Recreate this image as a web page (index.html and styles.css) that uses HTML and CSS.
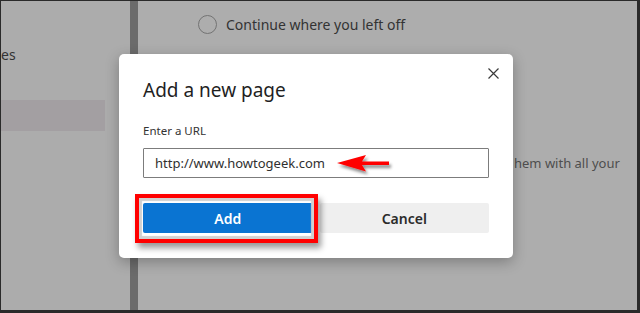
FILE: index.html
```html
<!DOCTYPE html>
<html lang="en">
<head>
  <meta charset="UTF-8">
  <title>Add a new page</title>
  <link rel="stylesheet" href="styles.css">
</head>
<body>

  <div class="screen">
    <aside class="sidebar">
      <div class="side-item">es</div>
      <div class="side-item selected"></div>
    </aside>
    <div class="divider"></div>

    <main class="settings">
      <div class="radio-row">
        <span class="radio"></span>
        <span>Continue where you left off</span>
      </div>
      <div class="radio-row">
        <span class="radio"></span>
        <span>Open a new tab</span>
      </div>
      <p class="hint">hem with all your</p>
    </main>

    <div class="dialog">
      <button class="close" aria-label="Close">
        <svg width="11" height="11" viewBox="0 0 11 11">
          <path d="M0.5 0.5 L10.5 10.5 M10.5 0.5 L0.5 10.5" stroke="#3a3a3a" stroke-width="1.2" fill="none"/>
        </svg>
      </button>
      <h1>Add a new page</h1>
      <label for="url">Enter a URL</label>
      <div class="url-box" id="url">http://www.howtogeek.com</div>
      <div class="actions">
        <button class="btn btn-add">Add</button>
        <button class="btn btn-cancel">Cancel</button>
      </div>
    </div>

    <!-- annotations drawn on top of the screenshot -->
    <div class="mark-box"></div>
    <svg class="mark-arrow" width="60" height="24" viewBox="0 0 60 24">
      <defs>
        <filter id="drop" x="-20%" y="-40%" width="150%" height="200%">
          <feDropShadow dx="2" dy="3" stdDeviation="1.6" flood-color="#000" flood-opacity="0.45"/>
        </filter>
      </defs>
      <path d="M2 10 L31 2 L27 8.5 L54 8.5 L54 12 L27 12 L31 18.5 Z" fill="#f00" filter="url(#drop)"/>
    </svg>
  </div>

</body>
</html>
```

FILE: styles.css
```css
/* General Styles */
body {
  margin: 0;
  font-family: 'Noto Sans', 'Open Sans', sans-serif;
  background: #222;
}

.screen {
  position: relative;
  display: flex;
  width: 640px;
  height: 313px;
  box-sizing: border-box;
  border-top: 1px solid #2a2a2a;
  border-left: 1px solid #2a2a2a;
  border-right: 3px solid #2a2a2a;
  border-bottom: 3px solid #2a2a2a;
  background: #adadad;
  overflow: hidden;
}

/* Sidebar */
.sidebar {
  width: 129px;
  flex-shrink: 0;
  background: #acacac;
  padding-top: 41px;
}

.side-item {
  height: 26px;
  line-height: 26px;
  font-size: 14px;
  color: #333;
}

.side-item.selected {
  margin-top: 32px;
  height: 31px;
  width: 104px;
  background: #a39fa2;
}

.divider {
  width: 8px;
  flex-shrink: 0;
  background: #6b6b6b;
}

/* Settings area */
.settings {
  flex: 1;
  padding: 13px 0 0 60px;
  color: #333;
  font-size: 14px;
}

.radio-row {
  display: flex;
  align-items: center;
  gap: 9px;
  height: 21px;
  margin-bottom: 18px;
}

.radio {
  width: 17px;
  height: 17px;
  border: 1px solid #737373;
  border-radius: 50%;
}

.hint {
  margin: 80px 0 0 316px;
  white-space: nowrap;
  font-size: 13px;
  color: #4e4e4e;
}

/* Dialog */
.dialog {
  position: absolute;
  left: 118px;
  top: 53px;
  width: 394px;
  height: 204px;
  box-sizing: border-box;
  padding: 22px 24px 24px;
  background: #fff;
  border-radius: 5px;
  box-shadow: 0 4px 14px rgba(0, 0, 0, 0.28);
  display: flex;
  flex-direction: column;
}

.close {
  position: absolute;
  top: 14px;
  right: 14px;
  padding: 0;
  border: none;
  background: none;
  line-height: 0;
}

h1 {
  margin: 0;
  font-size: 19px;
  font-weight: 400;
  line-height: 28px;
  color: #1f1f1f;
}

label {
  margin-top: 18px;
  font-size: 11.5px;
  line-height: 18px;
  color: #333;
}

.url-box {
  margin-top: 8px;
  height: 30px;
  box-sizing: border-box;
  border: 1px solid #7c7c7c;
  border-radius: 1px;
  padding: 0 11px;
  font-size: 13px;
  line-height: 28px;
  color: #303030;
}

.actions {
  display: flex;
  gap: 7px;
  margin-top: 25px;
}

.btn {
  flex: 1;
  height: 30px;
  border: none;
  border-radius: 2px;
  font-family: inherit;
  font-size: 14px;
  font-weight: 600;
}

.btn-add {
  background: #0a74d2;
  color: #fff;
}

.btn-cancel {
  background: #efefef;
  color: #2b2b2b;
}

/* Annotations */
.mark-box {
  position: absolute;
  left: 134px;
  top: 193px;
  width: 183px;
  height: 49px;
  box-sizing: border-box;
  border: 4px solid #f00;
  box-shadow: inset 0 0 1px 3px #d0d0d0, 3px 5px 6px rgba(0, 0, 0, 0.4);
}

.mark-arrow {
  position: absolute;
  left: 334px;
  top: 152px;
}
```
